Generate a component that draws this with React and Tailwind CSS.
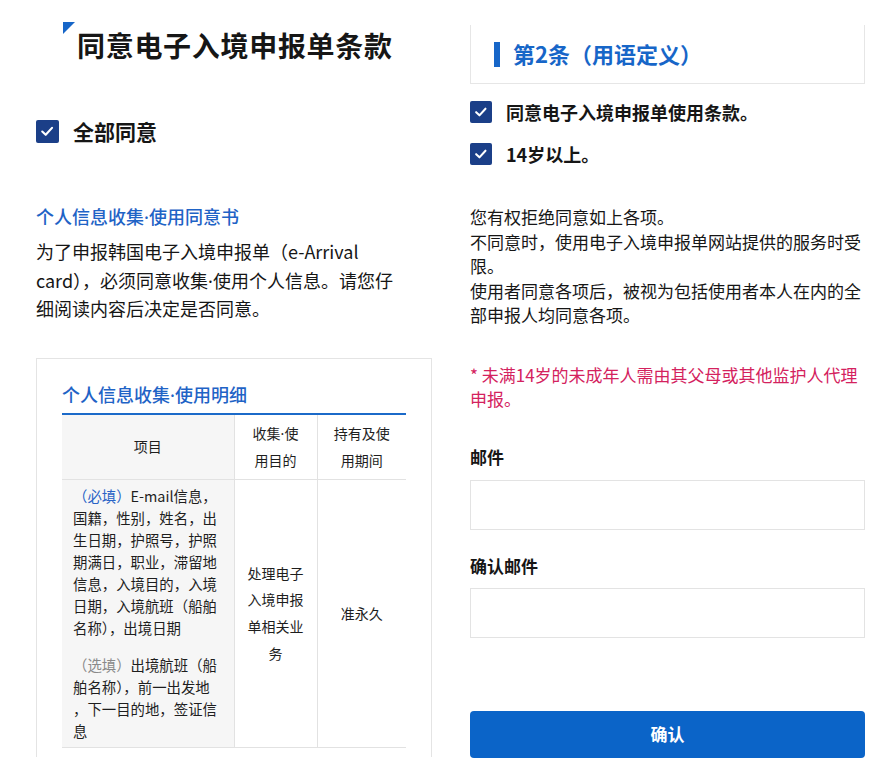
import React from "react";

const Check = ({ size = 23 }) => (
    <span
        className="flex items-center justify-center rounded-[2px] bg-[#1b3f88] shrink-0"
        style={{ width: size, height: size }}
    >
        <svg width={size * 0.62} height={size * 0.62} viewBox="0 0 14 14" fill="none">
            <path d="M2.2 7.4 L5.6 10.6 L11.8 3.8" stroke="#fff" strokeWidth="2.1" strokeLinecap="round" strokeLinejoin="round" />
        </svg>
    </span>
);

// narrow middle dot (CJK font draws it full width)
const Dot = () => <span className="font-['Noto_Sans',sans-serif] leading-none">·</span>;

const App = () => {
    return (
        <div className="min-h-[771px] w-[872px] bg-white text-[#161616] font-['Noto_Sans_CJK_SC','Noto_Sans',sans-serif] flex pl-[36px] gap-[38px] overflow-hidden">
            {/* left column */}
            <div className="w-[396px] flex flex-col shrink-0">
                <div className="relative pt-[27px] pl-[41px]">
                    <span className="absolute left-[27px] top-[22px] w-0 h-0 border-t-[12px] border-t-[#1766c8] border-r-[12px] border-r-transparent"></span>
                    <h1 className="text-[28px] leading-[36px] font-bold tracking-[0.7px]">同意电子入境申报单条款</h1>
                </div>

                <div className="flex items-center gap-[14px] mt-[57px]">
                    <Check size={23} />
                    <span className="text-[21px] leading-[23px] font-semibold">全部同意</span>
                </div>

                <h2 className="mt-[61px] h-[24px] text-[18px] leading-[24px] font-medium text-[#1f63c6]">个人信息收集<Dot />使用同意书</h2>
                <p className="mt-[9px] h-[85.5px] text-[18px] leading-[28.5px] whitespace-nowrap">
                    为了申报韩国电子入境申报单（e-Arrival<br />
                    card），必须同意收集<Dot />使用个人信息。请您仔<br />
                    细阅读内容后决定是否同意。
                </p>

                <div className="mt-[35px] border-x border-t border-[#e4e4e4] pt-[23px] px-[25px] pb-[9px]">
                    <h3 className="h-[24px] text-[18px] leading-[24px] font-medium text-[#1f63c6] mb-[7px]">个人信息收集<Dot />使用明细</h3>
                    <table className="w-full border-collapse border-t-2 border-t-[#1b6ac9] text-[14px] text-[#1e1e1e]">
                        <thead>
                            <tr className="h-[66px]">
                                <th className="w-[172px] bg-[#f6f6f6] font-normal border-b border-r border-[#e2e2e2] leading-[27px]">项目</th>
                                <th className="w-[83px] font-normal border-b border-r border-[#e2e2e2] leading-[27px]">收集<Dot />使<br />用目的</th>
                                <th className="font-normal border-b border-[#e2e2e2] leading-[27px]">持有及使<br />用期间</th>
                            </tr>
                        </thead>
                        <tbody>
                            <tr className="h-[268px]">
                                <td className="bg-[#f6f6f6] border-b border-r border-[#e2e2e2] pl-[11px] pr-[6px] py-[5px] align-middle text-[14.4px] leading-[22px] whitespace-nowrap">
                                    <div>
                                        <span className="text-[#2a64c6]">（必填）</span>E-mail信息，<br />
                                        国籍，性别，姓名，出<br />
                                        生日期，护照号，护照<br />
                                        期满日，职业，滞留地<br />
                                        信息，入境目的，入境<br />
                                        日期，入境航班（船舶<br />
                                        名称），出境日期
                                    </div>
                                    <div className="mt-[15px]">
                                        <span className="text-[#8a8a8a]">（选填）</span>出境航班（船<br />
                                        舶名称），前一出发地<br />
                                        ，下一目的地，签证信<br />
                                        息
                                    </div>
                                </td>
                                <td className="border-b border-r border-[#e2e2e2] text-center align-middle leading-[26.7px] pb-[1px]">
                                    处理电子<br />入境申报<br />单相关业<br />务
                                </td>
                                <td className="border-b border-[#e2e2e2] text-center align-middle">准永久</td>
                            </tr>
                        </tbody>
                    </table>
                </div>
            </div>

            {/* right column */}
            <div className="w-[395px] flex flex-col shrink-0">
                <div className="mt-[25px] h-[59px] border-x border-b border-[#e6e6e6] flex items-center pl-[23px]">
                    <span className="w-[6px] h-[25px] bg-[#1766c8] mr-[13px]"></span>
                    <span className="text-[22px] leading-[28px] font-bold text-[#1766c8] -mt-[3px]">第2条（用语定义）</span>
                </div>

                <div className="flex items-center gap-[14px] mt-[17px]">
                    <Check size={22} />
                    <span className="text-[18px] leading-[22px] font-semibold">同意电子入境申报单使用条款。</span>
                </div>
                <div className="flex items-center gap-[14px] mt-[20px]">
                    <Check size={22} />
                    <span className="text-[18px] leading-[22px] font-semibold">14岁以上。</span>
                </div>

                <p className="mt-[40px] text-[17px] leading-[24.5px]">
                    您有权拒绝同意如上各项。<br />
                    不同意时，使用电子入境申报单网站提供的服务时受限。<br />
                    使用者同意各项后，被视为包括使用者本人在内的全部申报人均同意各项。
                </p>

                <p className="mt-[35px] text-[17px] leading-[24.5px] text-[#d4225e]">
                    * 未满14岁的未成年人需由其父母或其他监护人代理申报。
                </p>

                <label className="mt-[33px] text-[17px] leading-[24px] font-bold">邮件</label>
                <input type="email" className="mt-[11px] h-[50px] w-full border-[1.5px] border-[#e3e3e3] outline-none px-3" />

                <label className="mt-[24px] text-[17px] leading-[24px] font-bold">确认邮件</label>
                <input type="email" className="mt-[10px] h-[50px] w-full border-[1.5px] border-[#e3e3e3] outline-none px-3" />

                <button className="mt-[73px] h-[47px] w-full rounded-[4px] bg-[#0b64c8] text-white text-[17px] font-bold">确认</button>
            </div>
        </div>
    );
};

export default App;
